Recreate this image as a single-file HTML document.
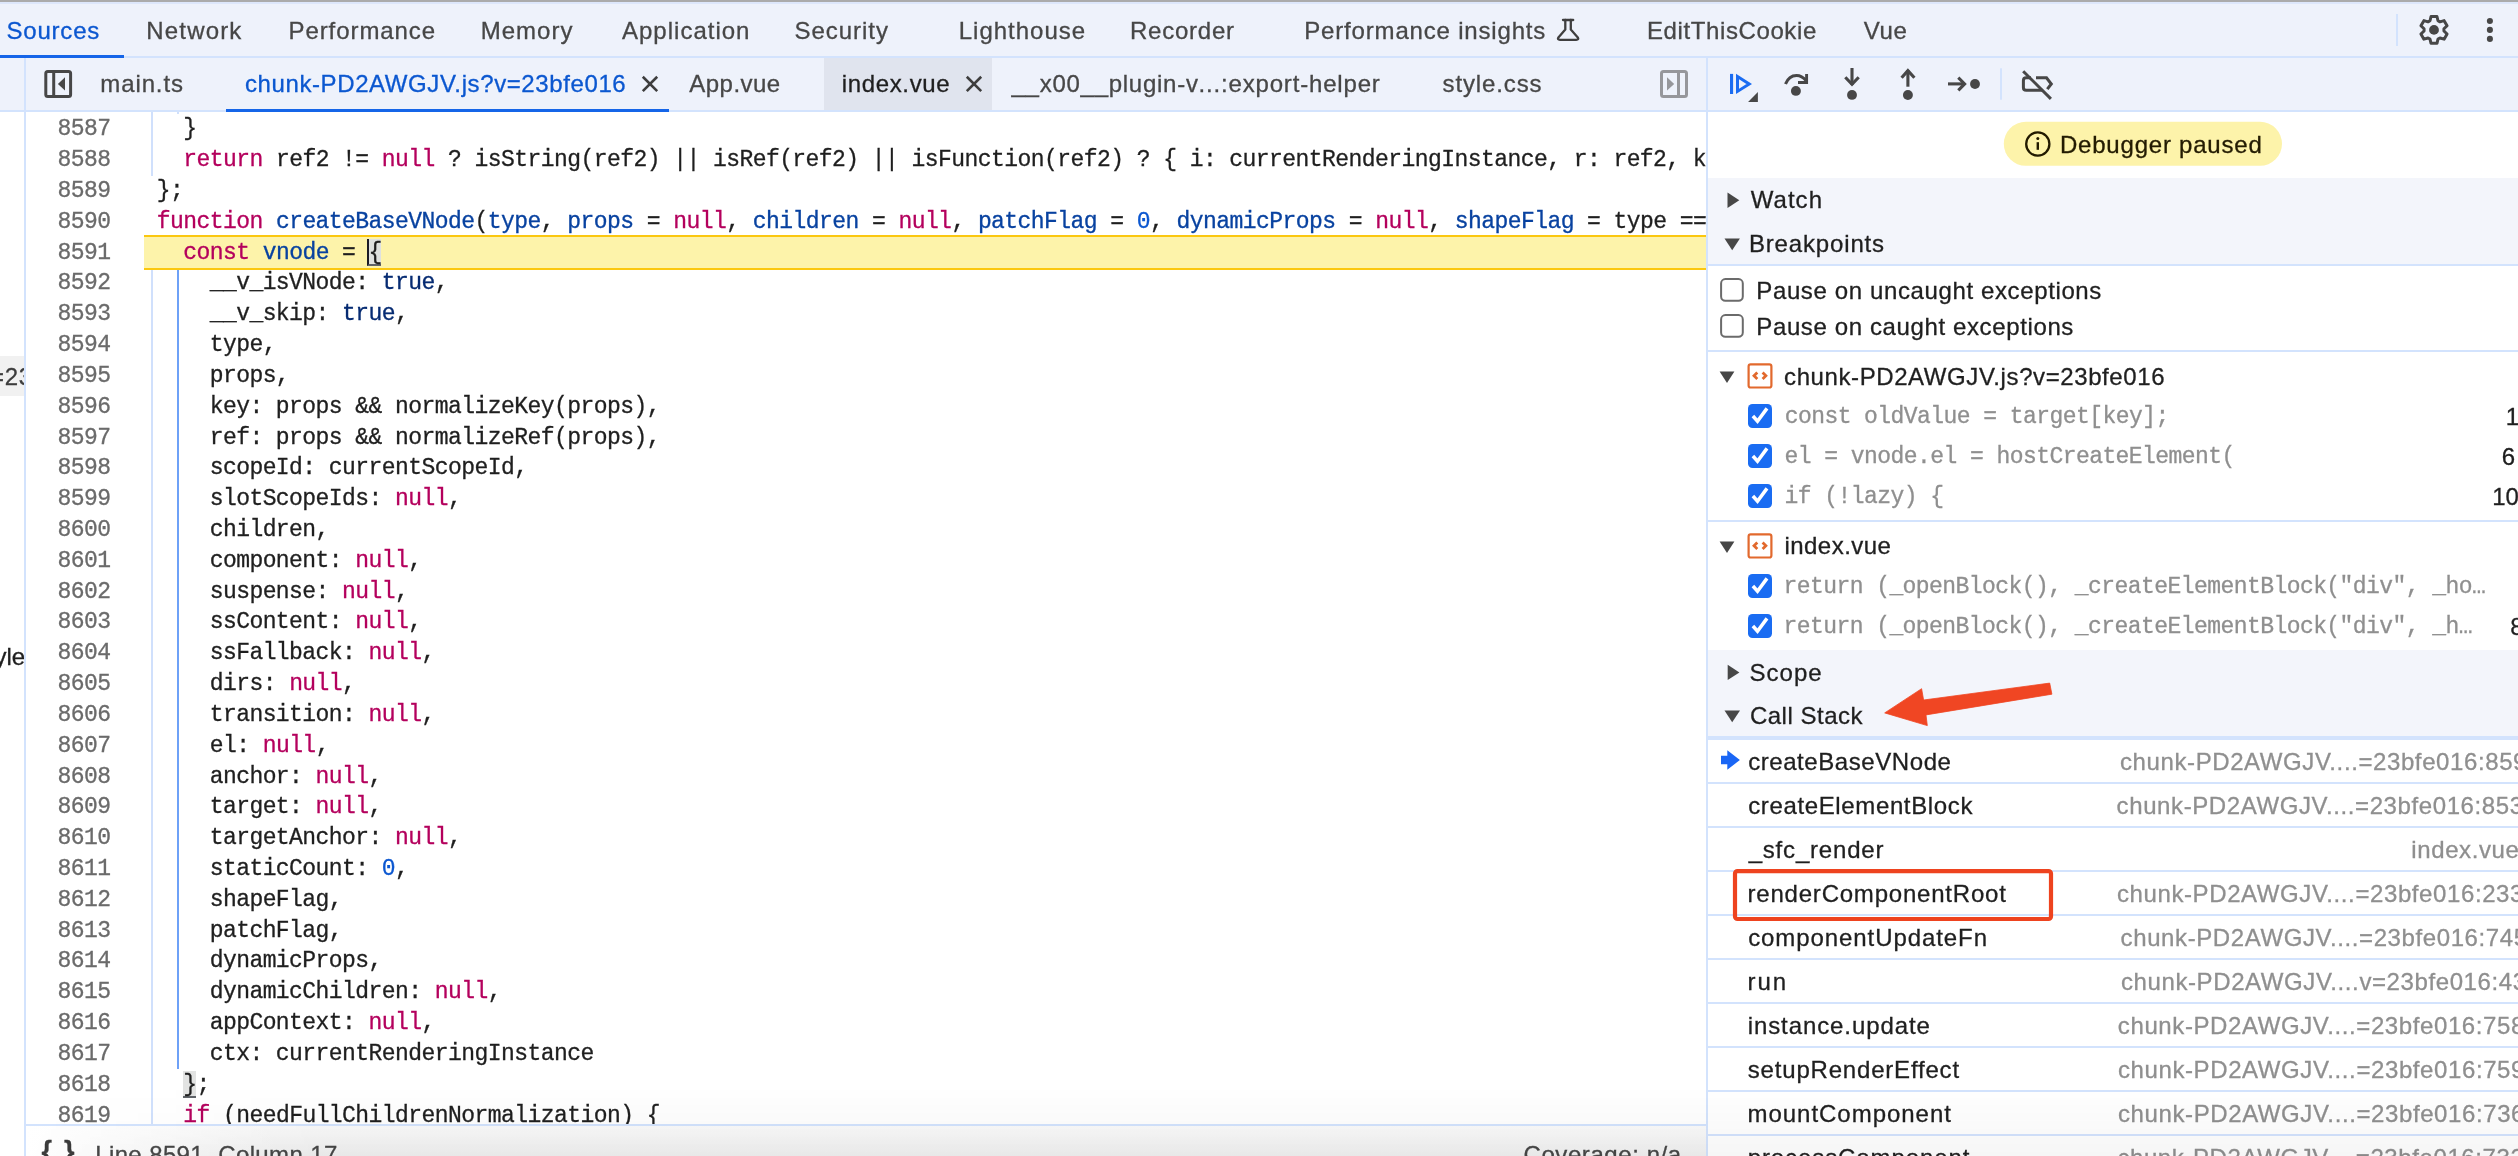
<!DOCTYPE html>
<html>
<head>
<meta charset="utf-8">
<title>DevTools</title>
<style>
*{box-sizing:border-box;margin:0;padding:0}
html,body{width:2518px;height:1156px;overflow:hidden;background:#fff}
body{position:relative;font-family:"Liberation Sans",sans-serif;font-size:24px;color:#1f1f1f}
.a{position:absolute}
.t{position:absolute;white-space:pre;display:block;-webkit-text-stroke:0.3px currentColor}
svg{position:absolute;overflow:visible}
/* bars */
#topline{left:0;top:0;width:2518px;height:2px;background:#ababab}
#topbar{left:0;top:2px;width:2518px;height:54px;background:#eef2fb;border-top:2px solid #dde7fb}
.bl{background:#d3e3fd}
#filebar{left:26px;top:58px;width:1680px;height:52px;background:#eef2fb}
#dbgbar{left:1708px;top:58px;width:810px;height:52px;background:#eef2fb}
#leftsl{left:0;top:58px;width:24px;height:54px;background:#eef2fb}
/* code */
#code{left:26px;top:112px;width:1680px;height:1012px;background:#fff;overflow:hidden}
.ln{position:absolute;left:0;width:84.5px;text-align:right;font-family:"Liberation Mono",monospace;font-size:23px;letter-spacing:-0.56px;color:#6b6b6b;-webkit-text-stroke:0.3px currentColor;height:31px;line-height:31px;white-space:pre}
.cl{position:absolute;left:130.7px;font-family:"Liberation Mono",monospace;font-size:23px;letter-spacing:-0.56px;color:#1f1f1f;-webkit-text-stroke:0.3px currentColor;height:31px;line-height:31px;white-space:pre}
.k{color:#b4005d}
.d{color:#0842a0}
.n{color:#0b57d0}
.at{color:#062b72}
#hl{left:118px;top:123px;width:1562px;height:35px;background:#fdf3aa;border-top:2px solid #fbc70f;border-bottom:2px solid #fbc70f}
.ig{position:absolute;width:2px;background:#d0e0fc}
.iga{position:absolute;width:2px;background:#6ea1f7}
/* right */
#right{left:1708px;top:112px;width:810px;height:1044px;background:#fff}
.sec{position:absolute;left:1708px;width:810px;background:#f3f5fb}
.hb{position:absolute;left:1708px;width:810px;height:2px;background:#d3e3fd}
.cb{position:absolute;width:24px;height:24px;border:2px solid #474747;border-radius:4px;background:#fff}
.cbx{position:absolute;width:24px;height:24px;border-radius:4px;background:#0b57d0}
#status{left:26px;top:1124px;width:1680px;height:32px;background:linear-gradient(to right,#fff 0px,rgba(255,255,255,0) 260px),linear-gradient(to bottom,#fafafa,#f1f1f1);border-top:2px solid #d3e3fd}
</style>
</head>
<body>
<div id="root" style="position:absolute;left:0;top:0;width:2518px;height:1156px;will-change:transform;overflow:hidden">
<!-- top tab bar -->
<div id="topline" class="a"></div>
<div id="topbar" class="a"></div>
<div class="a bl" style="left:0;top:56px;width:2518px;height:2px"></div>
<div class="a" style="left:0;top:55px;width:124px;height:3px;background:#1565e8"></div>
<!-- second row -->
<div id="leftsl" class="a"></div>
<div id="filebar" class="a"></div>
<div id="dbgbar" class="a"></div>
<div class="a bl" style="left:0;top:110px;width:2518px;height:2px"></div>
<!-- index.vue tab bg -->
<div class="a" style="left:824px;top:58px;width:168px;height:52px;background:#e0e4ee"></div>
<!-- chunk tab underline -->
<div class="a" style="left:226px;top:109px;width:443px;height:3px;background:#1565e8"></div>
<!-- vertical dividers -->
<div class="a bl" style="left:24px;top:58px;width:2px;height:1098px"></div>
<div class="a bl" style="left:1706px;top:58px;width:2px;height:1098px"></div>

<!-- left sliver -->
<div class="a" style="left:0;top:112px;width:24px;height:1044px;overflow:hidden;background:#fff">
<div class="a" style="left:0;top:244px;width:24px;height:39.5px;background:#f1f1f1"></div>
<span class="t" style="left:-9.9px;top:248.8px;height:31px;line-height:31px;font-size:24px;letter-spacing:0.6px;color:#3c3c3c">=23</span>
<span class="t" style="left:-5.6px;top:529px;height:31px;line-height:31px;font-size:24px;color:#1f1f1f">yle</span>
</div>
<!-- code area -->
<div id="code" class="a">
<div id="hl" class="a"></div>
<div class="ig" style="left:125px;top:0;height:64px"></div>
<div class="ig" style="left:125px;top:158px;height:860px"></div>
<div class="iga" style="left:151px;top:158px;height:799px"></div>
<div class="ig" style="left:151px;top:0;height:2px"></div>
<!-- bracket match -->
<div class="a" style="left:341px;top:127px;width:14px;height:27px;background:#dfe1df;border-left:2px solid #1c1c26;border-bottom:2px solid #5f6368"></div>
<div class="a" style="left:157px;top:959px;width:13px;height:27px;background:#e2e3e2;border-bottom:2px solid #5f6368"></div>
<div class="ln" style="top:2.31px">8587</div><div class="cl" style="top:2.31px">  }</div>
<div class="ln" style="top:33.13px">8588</div><div class="cl" style="top:33.13px">  <span class="k">return</span> ref2 != <span class="k">null</span> ? isString(ref2) || isRef(ref2) || isFunction(ref2) ? { i: currentRenderingInstance, r: ref2, k: ref_key, f: !!ref_for } : ref2 : <span class="k">null</span>;</div>
<div class="ln" style="top:63.95px">8589</div><div class="cl" style="top:63.95px">};</div>
<div class="ln" style="top:94.77px">8590</div><div class="cl" style="top:94.77px"><span class="k">function</span> <span class="d">createBaseVNode</span>(<span class="d">type</span>, <span class="d">props</span> = <span class="k">null</span>, <span class="d">children</span> = <span class="k">null</span>, <span class="d">patchFlag</span> = <span class="n">0</span>, <span class="d">dynamicProps</span> = <span class="k">null</span>, <span class="d">shapeFlag</span> = type === Fragment ? 0 : 1</div>
<div class="ln" style="top:125.59px">8591</div><div class="cl" style="top:125.59px">  <span class="k">const</span> <span class="d">vnode</span> = {</div>
<div class="ln" style="top:156.41px">8592</div><div class="cl" style="top:156.41px">    __v_isVNode: <span class="at">true</span>,</div>
<div class="ln" style="top:187.23px">8593</div><div class="cl" style="top:187.23px">    __v_skip: <span class="at">true</span>,</div>
<div class="ln" style="top:218.05px">8594</div><div class="cl" style="top:218.05px">    type,</div>
<div class="ln" style="top:248.87px">8595</div><div class="cl" style="top:248.87px">    props,</div>
<div class="ln" style="top:279.69px">8596</div><div class="cl" style="top:279.69px">    key: props &amp;&amp; normalizeKey(props),</div>
<div class="ln" style="top:310.51px">8597</div><div class="cl" style="top:310.51px">    ref: props &amp;&amp; normalizeRef(props),</div>
<div class="ln" style="top:341.33px">8598</div><div class="cl" style="top:341.33px">    scopeId: currentScopeId,</div>
<div class="ln" style="top:372.15px">8599</div><div class="cl" style="top:372.15px">    slotScopeIds: <span class="k">null</span>,</div>
<div class="ln" style="top:402.97px">8600</div><div class="cl" style="top:402.97px">    children,</div>
<div class="ln" style="top:433.79px">8601</div><div class="cl" style="top:433.79px">    component: <span class="k">null</span>,</div>
<div class="ln" style="top:464.61px">8602</div><div class="cl" style="top:464.61px">    suspense: <span class="k">null</span>,</div>
<div class="ln" style="top:495.43px">8603</div><div class="cl" style="top:495.43px">    ssContent: <span class="k">null</span>,</div>
<div class="ln" style="top:526.25px">8604</div><div class="cl" style="top:526.25px">    ssFallback: <span class="k">null</span>,</div>
<div class="ln" style="top:557.07px">8605</div><div class="cl" style="top:557.07px">    dirs: <span class="k">null</span>,</div>
<div class="ln" style="top:587.89px">8606</div><div class="cl" style="top:587.89px">    transition: <span class="k">null</span>,</div>
<div class="ln" style="top:618.71px">8607</div><div class="cl" style="top:618.71px">    el: <span class="k">null</span>,</div>
<div class="ln" style="top:649.53px">8608</div><div class="cl" style="top:649.53px">    anchor: <span class="k">null</span>,</div>
<div class="ln" style="top:680.35px">8609</div><div class="cl" style="top:680.35px">    target: <span class="k">null</span>,</div>
<div class="ln" style="top:711.17px">8610</div><div class="cl" style="top:711.17px">    targetAnchor: <span class="k">null</span>,</div>
<div class="ln" style="top:741.99px">8611</div><div class="cl" style="top:741.99px">    staticCount: <span class="n">0</span>,</div>
<div class="ln" style="top:772.81px">8612</div><div class="cl" style="top:772.81px">    shapeFlag,</div>
<div class="ln" style="top:803.63px">8613</div><div class="cl" style="top:803.63px">    patchFlag,</div>
<div class="ln" style="top:834.45px">8614</div><div class="cl" style="top:834.45px">    dynamicProps,</div>
<div class="ln" style="top:865.27px">8615</div><div class="cl" style="top:865.27px">    dynamicChildren: <span class="k">null</span>,</div>
<div class="ln" style="top:896.09px">8616</div><div class="cl" style="top:896.09px">    appContext: <span class="k">null</span>,</div>
<div class="ln" style="top:926.91px">8617</div><div class="cl" style="top:926.91px">    ctx: currentRenderingInstance</div>
<div class="ln" style="top:957.73px">8618</div><div class="cl" style="top:957.73px">  };</div>
<div class="ln" style="top:988.55px">8619</div><div class="cl" style="top:988.55px">  <span class="k">if</span> (needFullChildrenNormalization) {</div>
<div class="ln" style="top:1019.37px">8620</div><div class="cl" style="top:1019.37px">    normalizeChildren(vnode, children);</div>
</div>
<div id="status" class="a"></div>

<!-- right panel -->
<div id="right" class="a"></div>
<div class="sec" style="top:178px;height:86px"></div>
<div class="hb" style="top:264px"></div>
<div class="hb" style="top:350px"></div>
<div class="hb" style="top:520px"></div>
<div class="sec" style="top:650px;height:86px"></div>
<div class="hb" style="top:736px;height:4px"></div>
<!--RIGHT-->

<div class="hb" style="top:782.0px;height:2px"></div>
<div class="hb" style="top:826.0px;height:2px"></div>
<div class="hb" style="top:870.0px;height:2px"></div>
<div class="hb" style="top:914.0px;height:2px"></div>
<div class="hb" style="top:958.0px;height:2px"></div>
<div class="hb" style="top:1002.0px;height:2px"></div>
<div class="hb" style="top:1046.0px;height:2px"></div>
<div class="hb" style="top:1090.0px;height:2px"></div>
<div class="hb" style="top:1134.0px;height:2px"></div>
<div class="a bl" style="left:2396px;top:14px;width:2px;height:32px"></div>
<svg style="left:0;top:0" width="2518" height="60" viewBox="0 0 2518 60"><path d="M2437.99,20.73L2436.97,16.52L2431.03,16.52L2430.01,20.73L2428.05,21.86L2423.90,20.64L2420.93,25.78L2424.06,28.77L2424.06,31.03L2420.93,34.02L2423.90,39.16L2428.05,37.94L2430.01,39.07L2431.03,43.28L2436.97,43.28L2437.99,39.07L2439.95,37.94L2444.10,39.16L2447.07,34.02L2443.94,31.03L2443.94,28.77L2447.07,25.78L2444.10,20.64L2439.95,21.86Z" fill="none" stroke="#474747" stroke-width="3" stroke-linejoin="round"/><circle cx="2434.0" cy="29.9" r="4.9" fill="#474747"/></svg>
<svg style="left:0;top:0" width="2518" height="1156" viewBox="0 0 2518 1156"><g fill="#474747"><circle cx="2489.9" cy="21" r="3.05"/><circle cx="2489.9" cy="29.9" r="3.05"/><circle cx="2489.9" cy="38.9" r="3.05"/></g><g fill="none" stroke="#3f3f3f" stroke-width="2.3" stroke-linecap="round" stroke-linejoin="round"><path d="M1563,20H1573.2"/><path d="M1565.3,20V29.6L1558.4,37.4Q1557,39.8 1560,39.8H1576.2Q1579.2,39.8 1577.8,37.4L1570.8,29.6V20"/></g><g fill="none" stroke="#474747" stroke-width="3"><rect x="45.8" y="71.5" width="24.8" height="25" rx="2"/><path d="M53.7,71.4V96.6"/></g><path fill="#474747" d="M57.9,83.9L65,77.3V90.5Z"/><g fill="none" stroke="#96979b" stroke-width="3"><rect x="1661.5" y="71.5" width="25" height="25" rx="2"/><path d="M1678.5,71.4V96.6"/></g><path fill="#96979b" d="M1674.2,83.9L1667,77.3V90.5Z"/><g fill="none" stroke="#3e3e3e" stroke-width="2.6"><path d="M642.8,76.75L657.2,91.15M657.2,76.75L642.8,91.15"/><path d="M966.8,76.75L981.2,91.15M981.2,76.75L966.8,91.15"/></g><rect x="1730" y="73.9" width="3.1" height="20.1" fill="#1a6cf2"/><path d="M1737.5,76.6L1749.2,84.1L1737.5,91.4Z" fill="none" stroke="#1a6cf2" stroke-width="3"/><path d="M1757.9,91.9V101.9H1748.1Z" fill="#474747"/><path d="M1785.5,84C1788,77.5 1793,75.4 1796.5,75.4C1800.5,75.4 1803.5,77.3 1806,80.5" fill="none" stroke="#474747" stroke-width="3"/><path d="M1806.6,73.9V82.5H1798" fill="none" stroke="#474747" stroke-width="2.9"/><circle cx="1795.9" cy="90.9" r="4.95" fill="#474747"/><g fill="none" stroke="#474747" stroke-width="3.1"><path d="M1852,68V85"/><path d="M1845.3,77.2L1852,84.3L1858.7,77.2" stroke-linejoin="miter"/></g><circle cx="1852" cy="94.9" r="4.95" fill="#474747"/><g fill="none" stroke="#474747" stroke-width="3.1"><path d="M1907.9,86.7V70"/><path d="M1901.6,77.7L1907.9,70.6L1914.4,77.7"/></g><circle cx="1907.9" cy="95" r="4.95" fill="#474747"/><g fill="none" stroke="#474747" stroke-width="3.1"><path d="M1948,83.9H1965"/><path d="M1958.3,77.6L1964.6,83.9L1958.3,90.3"/></g><circle cx="1975" cy="84" r="4.95" fill="#474747"/><rect x="2000" y="68.3" width="2" height="31.4" fill="#d3e3fd"/><g fill="none" stroke="#474747" stroke-width="3"><path d="M2036,77.8H2046.5L2051.3,84L2047.3,89.2"/><path d="M2031,77.8H2026.2Q2023.4,77.8 2023.4,80.6V87.4Q2023.4,90.2 2026.2,90.2H2042"/><path d="M2023.2,71.2L2050.9,98.9"/></g><rect x="2003.8" y="121.8" width="278.2" height="44" rx="22" fill="#fdf3aa"/><circle cx="2037.8" cy="144" r="11.6" fill="none" stroke="#221a00" stroke-width="2.3"/><rect x="2036.6" y="142.2" width="2.4" height="7.6" fill="#221a00"/><circle cx="2037.8" cy="138.5" r="1.5" fill="#221a00"/><g fill="#474747"><path d="M1727.5,192.6L1739.3,200.3L1727.5,207.9Z"/><path d="M1724.5,238.4H1739.9L1732.2,250.2Z"/><path d="M1727.7,664.8L1739.4,672.4L1727.7,680Z"/><path d="M1724.5,710.5H1740L1732.2,722.2Z"/><path d="M1719.6,371.5H1734.4L1727,383Z"/><path d="M1719.6,541.5H1734.4L1727,553Z"/></g><path d="M1721,755.8H1727.3V750.3L1739.9,760L1727.3,769.7V764.3H1721Z" fill="#1a66f5"/><rect x="1735" y="871.1" width="316" height="47.9" rx="2.5" fill="none" stroke="#ee431f" stroke-width="4.2"/><path d="M1884.7,712.9L1921.6,688.7L1923.6,700L2049.7,683.1L2051.9,694.2L1926,714.9L1927.3,725.6Z" fill="#f04623" stroke="#f04623" stroke-width="0.8" stroke-linejoin="round"/></svg>
<svg style="left:0;top:0" width="2518" height="1156" viewBox="0 0 2518 1156"><rect x="1748.6" y="364.4" width="22.8" height="23.1" rx="2" fill="none" stroke="#e2692d" stroke-width="2.2"/><path d="M1757.3,372.5L1754,375.79999999999995L1757.3,379.09999999999997M1762.6,372.5L1765.9,375.79999999999995L1762.6,379.09999999999997" fill="none" stroke="#e2692d" stroke-width="2.8"/></svg>
<svg style="left:0;top:0" width="2518" height="1156" viewBox="0 0 2518 1156"><rect x="1748.6" y="534.4" width="22.8" height="23.1" rx="2" fill="none" stroke="#e2692d" stroke-width="2.2"/><path d="M1757.3,542.5L1754,545.8L1757.3,549.1M1762.6,542.5L1765.9,545.8L1762.6,549.1" fill="none" stroke="#e2692d" stroke-width="2.8"/></svg>
<svg style="left:0;top:0" width="2518" height="1156" viewBox="0 0 2518 1156"><rect x="1721.1" y="279.1" width="21.7" height="21.7" rx="4.3" fill="#fff" stroke="#6b6b6b" stroke-width="2"/></svg>
<svg style="left:0;top:0" width="2518" height="1156" viewBox="0 0 2518 1156"><rect x="1721.1" y="315.1" width="21.7" height="21.7" rx="4.3" fill="#fff" stroke="#6b6b6b" stroke-width="2"/></svg>
<div class="a" style="left:1747.9px;top:403.9px;width:24.2px;height:24px;border-radius:4.5px;background:#1a6cf2"></div><svg style="left:1747.9px;top:403.9px" width="24.2" height="24" viewBox="0 0 24.2 24"><path d="M4.9,12L9.5,17.2L19,4.4" fill="none" stroke="#fff" stroke-width="3.5"/></svg>
<div class="a" style="left:1747.9px;top:443.9px;width:24.2px;height:24px;border-radius:4.5px;background:#1a6cf2"></div><svg style="left:1747.9px;top:443.9px" width="24.2" height="24" viewBox="0 0 24.2 24"><path d="M4.9,12L9.5,17.2L19,4.4" fill="none" stroke="#fff" stroke-width="3.5"/></svg>
<div class="a" style="left:1747.9px;top:483.9px;width:24.2px;height:24px;border-radius:4.5px;background:#1a6cf2"></div><svg style="left:1747.9px;top:483.9px" width="24.2" height="24" viewBox="0 0 24.2 24"><path d="M4.9,12L9.5,17.2L19,4.4" fill="none" stroke="#fff" stroke-width="3.5"/></svg>
<div class="a" style="left:1747.9px;top:573.9px;width:24.2px;height:24px;border-radius:4.5px;background:#1a6cf2"></div><svg style="left:1747.9px;top:573.9px" width="24.2" height="24" viewBox="0 0 24.2 24"><path d="M4.9,12L9.5,17.2L19,4.4" fill="none" stroke="#fff" stroke-width="3.5"/></svg>
<div class="a" style="left:1747.9px;top:613.9px;width:24.2px;height:24px;border-radius:4.5px;background:#1a6cf2"></div><svg style="left:1747.9px;top:613.9px" width="24.2" height="24" viewBox="0 0 24.2 24"><path d="M4.9,12L9.5,17.2L19,4.4" fill="none" stroke="#fff" stroke-width="3.5"/></svg>

<span id="t0" class="t" style="left:6.50px;top:14.68px;height:31px;line-height:31px;font-size:24px;color:#0b57d0;font-family:'Liberation Sans',sans-serif;letter-spacing:0.794px;">Sources</span>
<span id="t1" class="t" style="left:146.31px;top:14.68px;height:31px;line-height:31px;font-size:24px;color:#474747;font-family:'Liberation Sans',sans-serif;letter-spacing:1.170px;">Network</span>
<span id="t2" class="t" style="left:288.51px;top:14.68px;height:31px;line-height:31px;font-size:24px;color:#474747;font-family:'Liberation Sans',sans-serif;letter-spacing:0.921px;">Performance</span>
<span id="t3" class="t" style="left:480.80px;top:14.68px;height:31px;line-height:31px;font-size:24px;color:#474747;font-family:'Liberation Sans',sans-serif;letter-spacing:0.982px;">Memory</span>
<span id="t4" class="t" style="left:622.01px;top:14.68px;height:31px;line-height:31px;font-size:24px;color:#474747;font-family:'Liberation Sans',sans-serif;letter-spacing:1.002px;">Application</span>
<span id="t5" class="t" style="left:794.58px;top:14.68px;height:31px;line-height:31px;font-size:24px;color:#474747;font-family:'Liberation Sans',sans-serif;letter-spacing:0.957px;">Security</span>
<span id="t6" class="t" style="left:958.80px;top:14.68px;height:31px;line-height:31px;font-size:24px;color:#474747;font-family:'Liberation Sans',sans-serif;letter-spacing:0.980px;">Lighthouse</span>
<span id="t7" class="t" style="left:1130.02px;top:14.68px;height:31px;line-height:31px;font-size:24px;color:#474747;font-family:'Liberation Sans',sans-serif;letter-spacing:0.754px;">Recorder</span>
<span id="t8" class="t" style="left:1304.31px;top:14.68px;height:31px;line-height:31px;font-size:24px;color:#474747;font-family:'Liberation Sans',sans-serif;letter-spacing:0.819px;">Performance insights</span>
<span id="t9" class="t" style="left:1646.89px;top:14.68px;height:31px;line-height:31px;font-size:24px;color:#474747;font-family:'Liberation Sans',sans-serif;letter-spacing:0.615px;">EditThisCookie</span>
<span id="t10" class="t" style="left:1863.84px;top:14.68px;height:31px;line-height:31px;font-size:24px;color:#474747;font-family:'Liberation Sans',sans-serif;letter-spacing:0.631px;">Vue</span>
<span id="t11" class="t" style="left:100.33px;top:68.48px;height:31px;line-height:31px;font-size:24px;color:#474747;font-family:'Liberation Sans',sans-serif;letter-spacing:0.875px;">main.ts</span>
<span id="t12" class="t" style="left:244.94px;top:68.48px;height:31px;line-height:31px;font-size:24px;color:#0b57d0;font-family:'Liberation Sans',sans-serif;letter-spacing:0.605px;">chunk-PD2AWGJV.js?v=23bfe016</span>
<span id="t13" class="t" style="left:689.33px;top:68.48px;height:31px;line-height:31px;font-size:24px;color:#474747;font-family:'Liberation Sans',sans-serif;letter-spacing:0.457px;">App.vue</span>
<span id="t14" class="t" style="left:841.76px;top:68.48px;height:31px;line-height:31px;font-size:24px;color:#1f1f1f;font-family:'Liberation Sans',sans-serif;letter-spacing:0.641px;">index.vue</span>
<span id="t15" class="t" style="left:1011.54px;top:68.48px;height:31px;line-height:31px;font-size:24px;color:#474747;font-family:'Liberation Sans',sans-serif;letter-spacing:0.730px;">__x00__plugin-v</span>
<span id="t16" class="t" style="left:1198.54px;top:68.48px;height:31px;line-height:31px;font-size:24px;color:#474747;font-family:'Liberation Sans',sans-serif;letter-spacing:0.826px;">...:export-helper</span>
<span id="t17" class="t" style="left:1442.53px;top:68.48px;height:31px;line-height:31px;font-size:24px;color:#474747;font-family:'Liberation Sans',sans-serif;letter-spacing:0.886px;">style.css</span>
<span id="t18" class="t" style="left:2060.01px;top:128.78px;height:31px;line-height:31px;font-size:24px;color:#231b02;font-family:'Liberation Sans',sans-serif;letter-spacing:0.781px;">Debugger paused</span>
<span id="t19" class="t" style="left:1750.63px;top:184.08px;height:31px;line-height:31px;font-size:24px;color:#1f1f1f;font-family:'Liberation Sans',sans-serif;letter-spacing:1.073px;">Watch</span>
<span id="t20" class="t" style="left:1748.91px;top:227.58px;height:31px;line-height:31px;font-size:24px;color:#1f1f1f;font-family:'Liberation Sans',sans-serif;letter-spacing:0.845px;">Breakpoints</span>
<span id="t21" class="t" style="left:1756.30px;top:275.08px;height:31px;line-height:31px;font-size:24px;color:#1f1f1f;font-family:'Liberation Sans',sans-serif;letter-spacing:0.622px;">Pause on uncaught exceptions</span>
<span id="t22" class="t" style="left:1756.30px;top:311.38px;height:31px;line-height:31px;font-size:24px;color:#1f1f1f;font-family:'Liberation Sans',sans-serif;letter-spacing:0.620px;">Pause on caught exceptions</span>
<span id="t23" class="t" style="left:1784.05px;top:360.78px;height:31px;line-height:31px;font-size:24px;color:#1f1f1f;font-family:'Liberation Sans',sans-serif;letter-spacing:0.595px;">chunk-PD2AWGJV.js?v=23bfe016</span>
<span id="t24" class="t" style="left:1784.42px;top:530.48px;height:31px;line-height:31px;font-size:24px;color:#1f1f1f;font-family:'Liberation Sans',sans-serif;letter-spacing:0.473px;">index.vue</span>
<span id="t25" class="t" style="left:1749.57px;top:657.18px;height:31px;line-height:31px;font-size:24px;color:#1f1f1f;font-family:'Liberation Sans',sans-serif;letter-spacing:1.018px;">Scope</span>
<span id="t26" class="t" style="left:1749.90px;top:700.08px;height:31px;line-height:31px;font-size:24px;color:#1f1f1f;font-family:'Liberation Sans',sans-serif;letter-spacing:0.509px;">Call Stack</span>
<span id="t27" class="t" style="left:1784.66px;top:402.37px;height:30px;line-height:30px;font-size:23px;color:#8f8f8f;font-family:'Liberation Mono',monospace;-webkit-text-stroke:0.3px currentColor;letter-spacing:-0.56px;">const oldValue = target[key];</span>
<span id="t28" class="t" style="left:1784.57px;top:442.37px;height:30px;line-height:30px;font-size:23px;color:#8f8f8f;font-family:'Liberation Mono',monospace;-webkit-text-stroke:0.3px currentColor;letter-spacing:-0.56px;">el = vnode.el = hostCreateElement(</span>
<span id="t29" class="t" style="left:1784.61px;top:482.37px;height:30px;line-height:30px;font-size:23px;color:#8f8f8f;font-family:'Liberation Mono',monospace;-webkit-text-stroke:0.3px currentColor;letter-spacing:-0.56px;">if (!lazy) {</span>
<span id="t30" class="t" style="left:1783.44px;top:572.37px;height:30px;line-height:30px;font-size:23px;color:#8f8f8f;font-family:'Liberation Mono',monospace;-webkit-text-stroke:0.3px currentColor;letter-spacing:-0.56px;">return (_openBlock(), _createElementBlock("div", _ho…</span>
<span id="t31" class="t" style="left:1783.44px;top:612.37px;height:30px;line-height:30px;font-size:23px;color:#8f8f8f;font-family:'Liberation Mono',monospace;-webkit-text-stroke:0.3px currentColor;letter-spacing:-0.56px;">return (_openBlock(), _createElementBlock("div", _h…</span>
<span id="t32" class="t" style="left:2505.78px;top:400.68px;height:31px;line-height:31px;font-size:24px;color:#1f1f1f;font-family:'Liberation Sans',sans-serif;">1</span>
<span id="t33" class="t" style="left:2501.75px;top:440.68px;height:31px;line-height:31px;font-size:24px;color:#1f1f1f;font-family:'Liberation Sans',sans-serif;">6</span>
<span id="t34" class="t" style="left:2492.21px;top:480.68px;height:31px;line-height:31px;font-size:24px;color:#1f1f1f;font-family:'Liberation Sans',sans-serif;">10</span>
<span id="t35" class="t" style="left:2510.16px;top:610.68px;height:31px;line-height:31px;font-size:24px;color:#1f1f1f;font-family:'Liberation Sans',sans-serif;">8</span>
<span id="t36" class="t" style="left:1748.15px;top:746.48px;height:31px;line-height:31px;font-size:24px;color:#1f1f1f;font-family:'Liberation Sans',sans-serif;letter-spacing:0.572px;">createBaseVNode</span>
<span id="t37" class="t" style="left:2120.00px;top:746.48px;height:31px;line-height:31px;font-size:24px;color:#8f8f8f;font-family:'Liberation Sans',sans-serif;letter-spacing:0.599px;">chunk-PD2AWGJV....=23bfe016:8591</span>
<span id="t38" class="t" style="left:1748.15px;top:790.48px;height:31px;line-height:31px;font-size:24px;color:#1f1f1f;font-family:'Liberation Sans',sans-serif;letter-spacing:0.637px;">createElementBlock</span>
<span id="t39" class="t" style="left:2116.60px;top:790.48px;height:31px;line-height:31px;font-size:24px;color:#8f8f8f;font-family:'Liberation Sans',sans-serif;letter-spacing:0.599px;">chunk-PD2AWGJV....=23bfe016:8537</span>
<span id="t40" class="t" style="left:1748.67px;top:834.48px;height:31px;line-height:31px;font-size:24px;color:#1f1f1f;font-family:'Liberation Sans',sans-serif;letter-spacing:0.803px;">_sfc_render</span>
<span id="t41" class="t" style="left:2411.34px;top:834.48px;height:31px;line-height:31px;font-size:24px;color:#8f8f8f;font-family:'Liberation Sans',sans-serif;letter-spacing:0.599px;">index.vue:1</span>
<span id="t42" class="t" style="left:1747.55px;top:878.48px;height:31px;line-height:31px;font-size:24px;color:#1f1f1f;font-family:'Liberation Sans',sans-serif;letter-spacing:0.784px;">renderComponentRoot</span>
<span id="t43" class="t" style="left:2116.97px;top:878.48px;height:31px;line-height:31px;font-size:24px;color:#8f8f8f;font-family:'Liberation Sans',sans-serif;letter-spacing:0.599px;">chunk-PD2AWGJV....=23bfe016:2337</span>
<span id="t44" class="t" style="left:1748.15px;top:922.48px;height:31px;line-height:31px;font-size:24px;color:#1f1f1f;font-family:'Liberation Sans',sans-serif;letter-spacing:0.920px;">componentUpdateFn</span>
<span id="t45" class="t" style="left:2120.60px;top:922.48px;height:31px;line-height:31px;font-size:24px;color:#8f8f8f;font-family:'Liberation Sans',sans-serif;letter-spacing:0.599px;">chunk-PD2AWGJV....=23bfe016:7454</span>
<span id="t46" class="t" style="left:1747.55px;top:966.48px;height:31px;line-height:31px;font-size:24px;color:#1f1f1f;font-family:'Liberation Sans',sans-serif;letter-spacing:1.978px;">run</span>
<span id="t47" class="t" style="left:2120.97px;top:966.48px;height:31px;line-height:31px;font-size:24px;color:#8f8f8f;font-family:'Liberation Sans',sans-serif;letter-spacing:0.599px;">chunk-PD2AWGJV....v=23bfe016:433</span>
<span id="t48" class="t" style="left:1747.66px;top:1010.48px;height:31px;line-height:31px;font-size:24px;color:#1f1f1f;font-family:'Liberation Sans',sans-serif;letter-spacing:0.910px;">instance.update</span>
<span id="t49" class="t" style="left:2117.86px;top:1010.48px;height:31px;line-height:31px;font-size:24px;color:#8f8f8f;font-family:'Liberation Sans',sans-serif;letter-spacing:0.599px;">chunk-PD2AWGJV....=23bfe016:7584</span>
<span id="t50" class="t" style="left:1747.80px;top:1054.48px;height:31px;line-height:31px;font-size:24px;color:#1f1f1f;font-family:'Liberation Sans',sans-serif;letter-spacing:0.806px;">setupRenderEffect</span>
<span id="t51" class="t" style="left:2117.97px;top:1054.48px;height:31px;line-height:31px;font-size:24px;color:#8f8f8f;font-family:'Liberation Sans',sans-serif;letter-spacing:0.599px;">chunk-PD2AWGJV....=23bfe016:7592</span>
<span id="t52" class="t" style="left:1747.53px;top:1098.48px;height:31px;line-height:31px;font-size:24px;color:#1f1f1f;font-family:'Liberation Sans',sans-serif;letter-spacing:0.970px;">mountComponent</span>
<span id="t53" class="t" style="left:2118.02px;top:1098.48px;height:31px;line-height:31px;font-size:24px;color:#8f8f8f;font-family:'Liberation Sans',sans-serif;letter-spacing:0.599px;">chunk-PD2AWGJV....=23bfe016:7366</span>
<span id="t54" class="t" style="left:1747.63px;top:1142.48px;height:31px;line-height:31px;font-size:24px;color:#1f1f1f;font-family:'Liberation Sans',sans-serif;letter-spacing:0.918px;">processComponent</span>
<span id="t55" class="t" style="left:2117.39px;top:1142.48px;height:31px;line-height:31px;font-size:24px;color:#8f8f8f;font-family:'Liberation Sans',sans-serif;letter-spacing:0.599px;">chunk-PD2AWGJV....=23bfe016:7321</span>
<span id="t56" class="t" style="left:95.18px;top:1138.58px;height:31px;line-height:31px;font-size:24px;color:#474747;font-family:'Liberation Sans',sans-serif;letter-spacing:0.387px;">Line 8591, Column 17</span>
<span id="t57" class="t" style="left:1523.49px;top:1138.58px;height:31px;line-height:31px;font-size:24px;color:#474747;font-family:'Liberation Sans',sans-serif;letter-spacing:0.576px;">Coverage: n/a</span>
<span id="t58" class="t" style="left:41.43px;top:1134.24px;height:34px;line-height:34px;font-size:27px;color:#3c3c3c;font-family:'Liberation Sans',sans-serif;font-weight:bold;letter-spacing:2.294px;">{ }</span>
<div class="a" style="left:26px;top:1086px;width:2492px;height:70px;background:linear-gradient(to bottom,rgba(0,0,0,0),rgba(0,0,0,0.035));-webkit-mask-image:linear-gradient(to right,transparent 0,#000 300px);mask-image:linear-gradient(to right,transparent 0,#000 300px);pointer-events:none"></div>
</div>
</body>
</html>
